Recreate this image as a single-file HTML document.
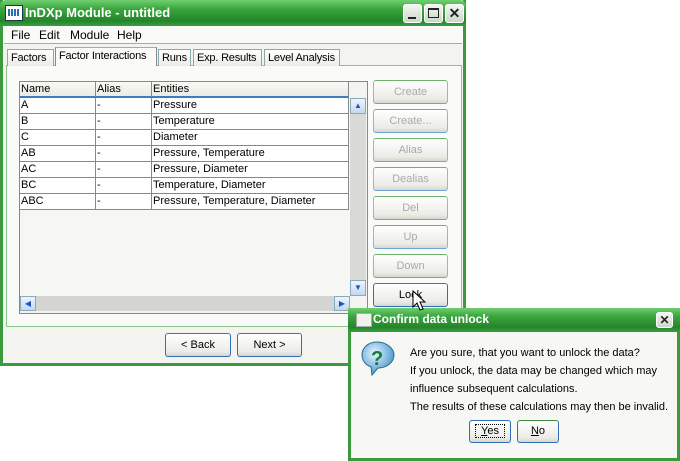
<html><head><style>
body{margin:0;width:680px;height:461px;background:#fff;position:relative;overflow:hidden;font-family:"Liberation Sans",sans-serif;font-size:11px;color:#000}
.a{position:absolute}
.tb{background:linear-gradient(#6fcf6f,#3aa53e 35%,#24852a 80%,#3a9e3f);color:#fff;font-weight:bold;font-size:13px}
.cb{width:19px;height:19px;border:1px solid #fff;border-radius:3px;background:linear-gradient(#f4f4f0,#c9d8c9);box-sizing:border-box}
.btn{border:1px solid #3c8b3c;border-radius:3px;background:linear-gradient(#fff,#ecebe6 80%,#d8d6cc);box-sizing:border-box;text-align:center;font-size:11px;white-space:nowrap}
.dis{color:#aaa;border-color:#6db36d #8bb8dc #6fa5d6 #8bb8dc}
.tab{top:49px;height:17px;border:1px solid #8aa;border-bottom:none;background:linear-gradient(#fff,#ecebe5);line-height:17px;padding:0 0 0 3px;box-sizing:border-box;font-size:11px;white-space:nowrap;overflow:hidden;letter-spacing:-0.2px}
.cell{position:absolute;height:16px;border-right:1px solid #888;border-bottom:1px solid #888;box-sizing:border-box;line-height:15px;padding-left:1px;background:#fff;white-space:nowrap}
.hd{background:linear-gradient(#fafaf6,#ebeae3);border-bottom:2px solid #3a7ec0}
.arr{width:16px;height:16px;border:1px solid #8ab;background:linear-gradient(#eef4fb,#c5d8ef);box-sizing:border-box;color:#1a56c8;font-size:8px;text-align:center;line-height:14px}
</style></head><body>
<div class="a" style="left:0;top:0;width:460px;height:363px;border:3px solid #3c9a3c;border-top:none;background:#f3f3ef"></div>
<div class="a tb" style="left:0;top:0;width:466px;height:26px;border-radius:6px 6px 0 0"></div>
<div class="a" style="left:5px;top:5px;width:16px;height:14px;background:#fff;border:1px solid #234"><div style="margin:3px 2px;height:7px;background:repeating-linear-gradient(90deg,#2a6fb0 0 2px,#fff 2px 3px)"></div></div>
<div class="a" style="left:25px;top:5px;color:#fff;font-weight:bold;font-size:13px">InDXp Module - untitled</div>
<div class="a cb" style="left:403px;top:4px"><div class="a" style="left:4px;top:12px;width:8px;height:2px;background:#222"></div></div>
<div class="a cb" style="left:424px;top:4px"><div class="a" style="left:3px;top:3px;width:11px;height:10px;border:1px solid #222;border-top-width:2px;box-sizing:border-box"></div></div>
<div class="a cb" style="left:445px;top:4px;text-align:center;font-weight:bold;font-size:14px;line-height:16px;color:#222">✕</div>
<div class="a" style="left:3px;top:26px;width:460px;height:17px;background:#fafaf8"></div>
<div class="a" style="left:11px;top:28px;font-size:12px">File</div>
<div class="a" style="left:39px;top:28px;font-size:12px">Edit</div>
<div class="a" style="left:70px;top:28px;font-size:12px">Module</div>
<div class="a" style="left:117px;top:28px;font-size:12px">Help</div>
<div class="a" style="left:4px;top:43px;width:458px;height:1px;background:#aaa"></div>
<div class="a" style="left:6px;top:65px;width:454px;height:260px;border:1px solid #8bc48b;background:#fafaf8"></div>
<div class="a tab" style="left:7px;width:47px">Factors</div>
<div class="a tab" style="left:55px;top:47px;height:19px;width:102px;border-color:#e4a030 #888 transparent;background:#fafaf8">Factor Interactions</div>
<div class="a tab" style="left:158px;width:33px">Runs</div>
<div class="a tab" style="left:193px;width:69px">Exp. Results</div>
<div class="a tab" style="left:264px;width:76px">Level Analysis</div>
<div class="a" style="left:19px;top:81px;width:347px;height:231px;border:1px solid #888;background:#f3f3f1"></div>
<div class="a" style="left:20px;top:82px;width:330px;height:214px;background:#f6f6f4"></div>
<div class="cell hd" style="left:20px;top:82px;width:76px">Name</div>
<div class="cell hd" style="left:96px;top:82px;width:56px">Alias</div>
<div class="cell hd" style="left:152px;top:82px;width:197px">Entities</div>
<div id="rows"></div>
<div class="a" style="left:350px;top:98px;width:16px;height:198px;background:#d9d9d6"></div>
<div class="a arr" style="left:350px;top:98px">▲</div>
<div class="a arr" style="left:350px;top:280px">▼</div>
<div class="a" style="left:20px;top:296px;width:330px;height:15px;background:#d4d4d2"></div>
<div class="a arr" style="left:20px;top:296px;height:15px">◀</div>
<div class="a arr" style="left:334px;top:296px;height:15px">▶</div>
<div class="a btn dis" style="left:373px;top:80px;width:75px;height:24px;line-height:22px">Create</div>
<div class="a btn dis" style="left:373px;top:109px;width:75px;height:24px;line-height:22px">Create...</div>
<div class="a btn dis" style="left:373px;top:138px;width:75px;height:24px;line-height:22px">Alias</div>
<div class="a btn dis" style="left:373px;top:167px;width:75px;height:24px;line-height:22px">Dealias</div>
<div class="a btn dis" style="left:373px;top:196px;width:75px;height:24px;line-height:22px">Del</div>
<div class="a btn dis" style="left:373px;top:225px;width:75px;height:24px;line-height:22px">Up</div>
<div class="a btn dis" style="left:373px;top:254px;width:75px;height:24px;line-height:22px">Down</div>
<div class="a btn" style="left:373px;top:283px;width:75px;height:24px;line-height:22px;border-color:#3c8b3c #2f6fb8 #2f6fb8">Lock</div>
<div class="a btn" style="left:165px;top:333px;width:66px;height:24px;line-height:22px;border-color:#3c8b3c #2f6fb8 #2f6fb8">&lt; Back</div>
<div class="a btn" style="left:237px;top:333px;width:65px;height:24px;line-height:22px;border-color:#3c8b3c #2f6fb8 #2f6fb8">Next &gt;</div>
<div class="a" style="left:348px;top:308px;width:332px;height:153px;background:#3c9a3c"></div>
<div class="a" style="left:351px;top:332px;width:326px;height:126px;background:#f7f7f5"></div>
<div class="a tb" style="left:348px;top:308px;width:332px;height:24px"></div>
<div class="a" style="left:356px;top:313px;width:14px;height:12px;background:#f0f0ec;border:1px solid #aaa"></div>
<div class="a" style="left:373px;top:312px;color:#fff;font-weight:bold;font-size:12px">Confirm data unlock</div>
<div class="a cb" style="left:656px;top:312px;width:17px;height:16px;text-align:center;font-weight:bold;font-size:12px;line-height:14px;color:#222">✕</div>
<svg class="a" style="left:361px;top:340px" width="36" height="36" viewBox="0 0 36 36"><defs><radialGradient id="g" cx=".4" cy=".35" r=".7"><stop offset="0" stop-color="#e8f6ff"/><stop offset="1" stop-color="#3a8fc8"/></radialGradient></defs><path d="M16 2C7 2 1 8 1 15c0 6 4 10 9 12l1 8 6-7c9 0 16-6 16-13S25 2 16 2z" fill="url(#g)" stroke="#2a6c8c"/><text x="10" y="25" font-size="20" font-weight="bold" fill="#127a3c" font-family="Liberation Sans">?</text></svg>
<div class="a" style="left:410px;top:344px;font-size:11px;line-height:18px;color:#000">Are you sure, that you want to unlock the data?<br>If you unlock, the data may be changed which may<br>influence subsequent calculations.<br>The results of these calculations may then be invalid.</div>
<div class="a btn" style="left:469px;top:420px;width:42px;height:23px;line-height:21px;border-color:#2f6fb8"><span style="outline:1px dotted #000;padding:0 5px"><u>Y</u>es</span></div>
<div class="a btn" style="left:517px;top:420px;width:42px;height:23px;line-height:21px;border-color:#3c8b3c #2f6fb8 #2f6fb8"><u>N</u>o</div>
<svg class="a" style="left:412px;top:290px" width="14" height="22" viewBox="0 0 14 22"><path d="M1 1v16l4-4 3 7 3-1-3-7h5z" fill="#fff" stroke="#000"/></svg>
<script>
var r=[["A","Pressure"],["B","Temperature"],["C","Diameter"],["AB","Pressure, Temperature"],["AC","Pressure, Diameter"],["BC","Temperature, Diameter"],["ABC","Pressure, Temperature, Diameter"]],h="";
r.forEach(function(x,i){var t=98+i*16;h+='<div class="cell" style="left:20px;top:'+t+'px;width:76px">'+x[0]+'</div><div class="cell" style="left:96px;top:'+t+'px;width:56px">-</div><div class="cell" style="left:152px;top:'+t+'px;width:197px">'+x[1]+'</div>';});
document.getElementById("rows").outerHTML=h;
</script>
</body></html>
